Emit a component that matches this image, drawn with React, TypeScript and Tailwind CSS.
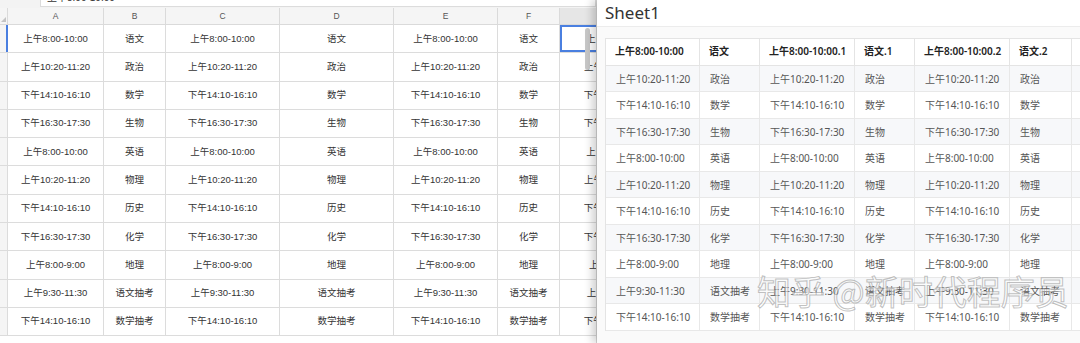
import React from "react";

const times = [
  "上午8:00-10:00",
  "上午10:20-11:20",
  "下午14:10-16:10",
  "下午16:30-17:30",
  "上午8:00-10:00",
  "上午10:20-11:20",
  "下午14:10-16:10",
  "下午16:30-17:30",
  "上午8:00-9:00",
  "上午9:30-11:30",
  "下午14:10-16:10",
];
const subjects = ["语文", "政治", "数学", "生物", "英语", "物理", "历史", "化学", "地理", "语文抽考", "数学抽考"];

const leftCols = [
  { k: "A", w: "w-[96px]", t: true },
  { k: "B", w: "w-[62px]", t: false },
  { k: "C", w: "w-[114px]", t: true },
  { k: "D", w: "w-[114px]", t: false },
  { k: "E", w: "w-[104px]", t: true },
  { k: "F", w: "w-[62px]", t: false },
  { k: "G", w: "w-[118px]", t: true },
];

const rightCols = [
  { h: "上午8:00-10:00", w: "w-[94px]", t: true },
  { h: "语文", w: "w-[60px]", t: false },
  { h: "上午8:00-10:00.1", w: "w-[95px]", t: true },
  { h: "语文.1", w: "w-[60px]", t: false },
  { h: "上午8:00-10:00.2", w: "w-[95px]", t: true },
  { h: "语文.2", w: "w-[62px]", t: false },
  { h: "", w: "w-[60px]", t: false },
];

function LeftPanel() {
  return (
    <div className="relative w-[597px] shrink-0 h-full overflow-hidden bg-white border-r border-[#d9d9d9] font-['Liberation_Sans','Noto_Sans_CJK_SC',sans-serif]">
      {/* formula bar (clipped) */}
      <div className="h-[8px] overflow-hidden bg-[#f3f3f3] flex">
        <div className="ml-[40px] -mt-[12px] h-[19px] w-[560px] bg-white border border-[#dcdcdc] text-[10px] text-[#333] pl-[6px] leading-[18px]">
          上午8:00-10:00
        </div>
      </div>
      {/* column headers */}
      <div className="flex h-[17px] bg-[#f5f5f5] border-b border-[#dadada]">
        <div className="w-[8px] shrink-0 relative border-r border-[#dadada]">
          <div className="absolute left-[1px] bottom-[2px] w-0 h-0 border-l-[5px] border-l-transparent border-b-[5px] border-b-[#c4c4c4]" />
        </div>
        {leftCols.map((c) => (
          <div
            key={c.k}
            className={`${c.w} shrink-0 border-r border-[#dadada] text-[8.5px] text-[#555] flex items-center justify-center ${c.k === "G" ? "bg-[#e6e6e6]" : ""}`}
          >
            {c.k === "G" ? "" : c.k}
          </div>
        ))}
      </div>
      {/* rows */}
      {times.map((t, i) => (
        <div key={i} className="flex h-[28.3px] border-b border-[#dcdcdc]">
          <div className={`w-[8px] shrink-0 border-r ${i === 0 ? "border-r-[2px] border-[#4a7fe0]" : "border-[#dcdcdc]"} bg-[#f5f5f5]`} />
          {leftCols.map((c) => (
            <div
              key={c.k}
              className={`${c.w} shrink-0 border-r border-[#dcdcdc] flex items-center justify-center text-[9.5px] text-[#333] whitespace-nowrap overflow-hidden ${
                c.k === "G" && i === 0 ? "outline outline-2 -outline-offset-2 outline-[#4a7fe0]" : ""
              }`}
            >
              {c.t ? t : subjects[i]}
            </div>
          ))}
        </div>
      ))}
      {/* scrollbar */}
      <div className="absolute left-[585px] top-[28px] w-[5px] h-[42px] rounded-full bg-[#c8c8c8]" />
    </div>
  );
}

function RightPanel() {
  return (
    <div className="relative flex-1 h-full overflow-hidden bg-[#fafafa] shadow-[-5px_0_8px_rgba(0,0,0,0.18)] font-['Noto_Sans','Noto_Sans_CJK_SC',sans-serif]">
      <div className="h-[27px] pl-[8px] flex items-center text-[17px] text-[#333] border-b border-[#ececec] bg-white">
        Sheet1
      </div>
      <div className="pl-[8px] pt-[11px]">
        <div className="w-[600px] border-t border-l border-[#e4e4e4] bg-white">
          <div className="flex h-[26.5px] border-b border-[#e4e4e4]">
            {rightCols.map((c, j) => (
              <div
                key={j}
                className={`${c.w} shrink-0 border-r border-[#e4e4e4] pl-[9px] flex items-center text-[10px] font-semibold text-[#222] whitespace-nowrap overflow-hidden`}
              >
                {c.h}
              </div>
            ))}
          </div>
          {times.slice(1).map((t, i) => (
            <div
              key={i}
              className={`flex h-[26.5px] border-b border-[#e8e8e8] ${i % 2 === 0 ? "bg-[#f7f8fa]" : "bg-white"}`}
            >
              {rightCols.map((c, j) => (
                <div
                  key={j}
                  className={`${c.w} shrink-0 border-r border-[#e8e8e8] pl-[10px] pt-[2px] flex items-center text-[10px] text-[#555] whitespace-nowrap`}
                >
                  {j === 6 ? "" : c.t ? t : subjects[i + 1]}
                </div>
              ))}
            </div>
          ))}
        </div>
      </div>
      {/* watermark */}
      <div className="absolute left-[160px] top-[274px] text-[34px] leading-none whitespace-nowrap text-[rgba(255,255,255,0.6)] [-webkit-text-stroke:1px_rgba(140,140,140,0.55)] font-['Noto_Sans_CJK_SC',sans-serif] pointer-events-none">
        知乎 @新时代程序员
      </div>
    </div>
  );
}

export default function App() {
  return (
    <div className="w-[1080px] h-[343px] flex overflow-hidden bg-white">
      <LeftPanel />
      <RightPanel />
    </div>
  );
}
